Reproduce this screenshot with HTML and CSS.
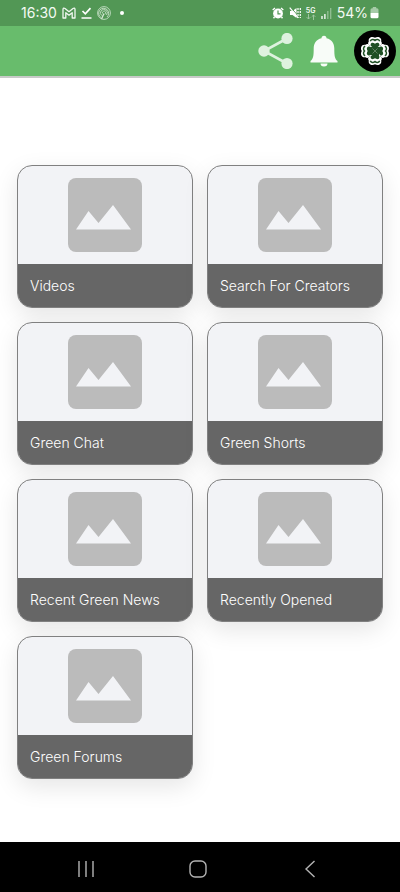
FILE: index.html
```html
<!DOCTYPE html>
<html lang="en">
<head>
<meta charset="utf-8">
<meta name="viewport" content="width=device-width, initial-scale=1">
<title>Green</title>
<link rel="stylesheet" href="styles.css">
</head>
<body>
<svg class="defs" aria-hidden="true">
  <symbol id="photo" viewBox="0 0 74 74">
    <rect width="74" height="74" rx="8" fill="#bbb"/>
    <path d="M8 51.500 20.500 33 30.500 45 45 27 63 51.500Z" fill="#f2f3f6"/>
  </symbol>
</svg>
<div class="status">
  <div class="group">
    <span class="time">16:30</span>
    <svg width="14" height="12" viewBox="0 0 14 12" fill="none" stroke="#f0f7f0" stroke-width="1.300" stroke-linejoin="round"><path d="M1 11V2.300Q1.300.500 3 1.500L7 4.700 11 1.500Q12.700.500 13 2.300V11H10.200V5.700L7 8.200 3.800 5.700V11Z"/></svg>
    <svg width="11" height="12" viewBox="0 0 11 12" fill="none" stroke="#fff" stroke-width="1.700"><path d="M1.500 4 4.300 6.800 9.500 1.200M.500 11H10.500"/></svg>
    <svg width="14" height="14" viewBox="0 0 14 14" fill="none" stroke="#d5e8d5" stroke-width=".8"><circle cx="7" cy="7" r="6.400"/><path d="M4 11.500A5 5 0 1 1 10 11M5 9.700A3.400 3.400 0 1 1 9.500 9M5.500 7.500A1.700 1.700 0 1 1 8 8.300"/><path d="M4.500 13 7 7.500" stroke-width="1.300"/></svg>
    <span class="dot"></span>
  </div>
  <div class="group right">
    <svg width="12" height="12" viewBox="0 0 12 12"><circle cx="6" cy="6.500" r="4.900" fill="#fff"/><path d="M.700 3 3 1M11.300 3 9 1M2.500 10 1.500 11.300M9.500 10 10.500 11.300" stroke="#fff" stroke-width="1.400"/><path d="M6 3.500V6.800H8.500" fill="none" stroke="#529755" stroke-width="1.200"/></svg>
    <svg width="12" height="12" viewBox="0 0 12 12"><path d="M1 4H3.500L7.500 1V11L3.500 8H1Z" fill="#fff"/><path d="M1.500 0 10 10" stroke="#529755" stroke-width="1"/><path d="M.700.700 9.200 10.800" stroke="#fff" stroke-width="1.200"/><path d="M9 1V11M11.300 1V11" stroke="#fff" stroke-width="1.200" stroke-dasharray="2 1"/></svg>
    <span class="net"><span>5G</span><svg width="10" height="6" viewBox="0 0 10 6" fill="none" stroke="#a6cba8" stroke-width=".9"><path d="M2.500 0V5M.700 3.200 2.500 5 4.300 3.200M7.500 6V1M5.700 2.800 7.500 1 9.300 2.800"/></svg></span>
    <svg width="11" height="12" viewBox="0 0 11 12"><path d="M1 9V12M3.900 7V12" stroke="#fff" stroke-width="1.300"/><path d="M6.800 4V12M9.700 1V12" stroke="#93bf95" stroke-width="1.300"/></svg>
    <span class="percent">54%</span>
    <svg class="battery" width="9" height="12" viewBox="0 0 9 12"><path d="M2.800 0H6.200V1.200H7A1.500 1.500 0 0 1 8.500 2.700V6H.500V2.700A1.500 1.500 0 0 1 2 1.200H2.800Z" fill="#a6cba8"/><path d="M.500 6H8.500V9.700A1.500 1.500 0 0 1 7 11.200H2A1.500 1.500 0 0 1 .500 9.700Z" fill="#fff"/></svg>
  </div>
</div>
<header class="bar">
  <button class="tool" aria-label="Share"><svg width="36" height="36" viewBox="0 0 36 36" fill="#def2df"><path d="M29 5.500 6 18 29 30.500" fill="none" stroke="#def2df" stroke-width="2.600"/><circle cx="6" cy="18" r="5.700"/><circle cx="29" cy="5.500" r="5.600"/><circle cx="29" cy="30.500" r="5.600"/></svg></button>
  <button class="tool" aria-label="Notifications"><svg width="28" height="32" viewBox="0 0 28 32" fill="#f8fcf8"><path d="M11.500 3.200A2.500 2.500 0 0 1 16.500 3.200C22 4.500 24.300 8.500 24.300 13.500C24.300 21 24.800 23.800 27.500 26V27.500H.500V26C3.200 23.800 3.700 21 3.700 13.500C3.700 8.500 6 4.500 11.500 3.200ZM10.500 28.500H17.500A3.500 3 0 0 1 10.500 28.500Z"/></svg></button>
  <button class="tool" aria-label="Profile"><svg width="42" height="42" viewBox="0 0 42 42">
    <defs><g id="leaf"><path d="M21 21C17 19 15.500 17.500 15.700 15.500C13.500 14.500 14 12.500 14.800 11.500C14 7.500 18 6 21 7.800C24 6 28 7.500 27.200 11.500C28 12.500 28.500 14.500 26.300 15.500C26.500 17.500 25 19 21 21Z" fill="#fff"/><path d="M21 20C17.500 18.500 16 16 16.700 14C17.500 12.300 19.500 12.700 21 13.700C22.500 12.700 24.500 12.300 25.300 14C26 16 24.500 18.500 21 20Z" fill="#1f4f24"/><path d="M16.300 11.200C17 9.200 19.500 9 21 10.500C22.500 9 25 9.200 25.700 11.200" fill="none" stroke="#1f4f24" stroke-width="1.500"/></g></defs>
    <circle cx="21" cy="21" r="21"/>
    <use href="#leaf"/><use href="#leaf" transform="rotate(90 21 21)"/><use href="#leaf" transform="rotate(180 21 21)"/><use href="#leaf" transform="rotate(270 21 21)"/>
    <rect x="16.500" y="16.500" width="9" height="9" rx="2" fill="#1f4f24"/><path d="M18.500 18.500 23.500 23.500M23.500 18.500 18.500 23.500" stroke="#7b987d" stroke-width=".7"/>
  </svg></button>
</header>
<main class="grid">
  <a class="card" href="#videos"><span class="thumb"><svg class="photo"><use href="#photo"/></svg></span><span class="label">Videos</span></a>
  <a class="card" href="#creators"><span class="thumb"><svg class="photo"><use href="#photo"/></svg></span><span class="label">Search For Creators</span></a>
  <a class="card" href="#chat"><span class="thumb"><svg class="photo"><use href="#photo"/></svg></span><span class="label">Green Chat</span></a>
  <a class="card" href="#shorts"><span class="thumb"><svg class="photo"><use href="#photo"/></svg></span><span class="label">Green Shorts</span></a>
  <a class="card" href="#news"><span class="thumb"><svg class="photo"><use href="#photo"/></svg></span><span class="label">Recent Green News</span></a>
  <a class="card" href="#recent"><span class="thumb"><svg class="photo"><use href="#photo"/></svg></span><span class="label">Recently Opened</span></a>
  <a class="card" href="#forums"><span class="thumb"><svg class="photo"><use href="#photo"/></svg></span><span class="label">Green Forums</span></a>
</main>
<nav class="system">
  <button class="key" aria-label="Recent apps"><svg width="18" height="18" viewBox="0 0 18 18"><path d="M2 1V17M9 1V17M16 1V17"/></svg></button>
  <button class="key" aria-label="Home"><svg width="18" height="18" viewBox="0 0 18 18"><rect x="1" y="1" width="16" height="16" rx="5"/></svg></button>
  <button class="key" aria-label="Back"><svg width="18" height="18" viewBox="0 0 18 18"><path d="M13.500 1 5 9 13.500 17"/></svg></button>
</nav>
</body>
</html>
```
FILE: styles.css
```css
* { box-sizing: border-box; }
body {
  margin: 0;
  min-height: 100vh;
  display: flex;
  flex-direction: column;
  background: #fff;
  font-family: Inter, "Liberation Sans", sans-serif;
}
svg { display: block; flex: none; }
.defs { position: absolute; width: 0; height: 0; }
button { border: 0; padding: 0; background: none; }

.status {
  height: 26px;
  padding: 0 21px;
  display: flex;
  justify-content: space-between;
  background: #529755;
  color: #f4faf4;
}
.group { display: flex; align-items: center; gap: 5px; }
.time, .percent { font-size: 14px; line-height: 26px; }
.battery { margin-left: -3px; }
.dot { width: 4px; height: 4px; margin-left: 4px; border-radius: 50%; background: #fff; }
.net { display: flex; flex-direction: column; align-items: center; font-size: 7px; line-height: 7px; font-weight: 600; }

.bar {
  height: 52px;
  padding: 0 4px;
  display: flex;
  align-items: center;
  justify-content: flex-end;
  gap: 16px;
  background: #68bc6c;
  border-bottom: 2px solid #c8cac8;
}

.grid {
  flex: 1;
  padding: 87px 17px 63px;
  display: grid;
  grid-template-columns: 1fr 1fr;
  align-content: start;
  gap: 14px;
}
.card {
  display: flex;
  flex-direction: column;
  overflow: hidden;
  border: 1px solid #808080;
  border-radius: 15px;
  background: #f2f3f6;
  box-shadow: 0 8px 24px rgba(0, 0, 0, .1);
  text-decoration: none;
}
.thumb { display: flex; justify-content: center; padding: 12px 0; }
.photo { width: 74px; height: 74px; }
.label {
  padding: 0 12px;
  background: #666;
  color: #fff;
  font-size: 14px;
  font-weight: 300;
  line-height: 43px;
}

.system {
  height: 50px;
  display: flex;
  justify-content: space-between;
  align-items: center;
  padding: 3px 81px 0 77px;
  background: #000;
}
.key svg { fill: none; stroke: #b4b4b4; stroke-width: 1.4; }
```
